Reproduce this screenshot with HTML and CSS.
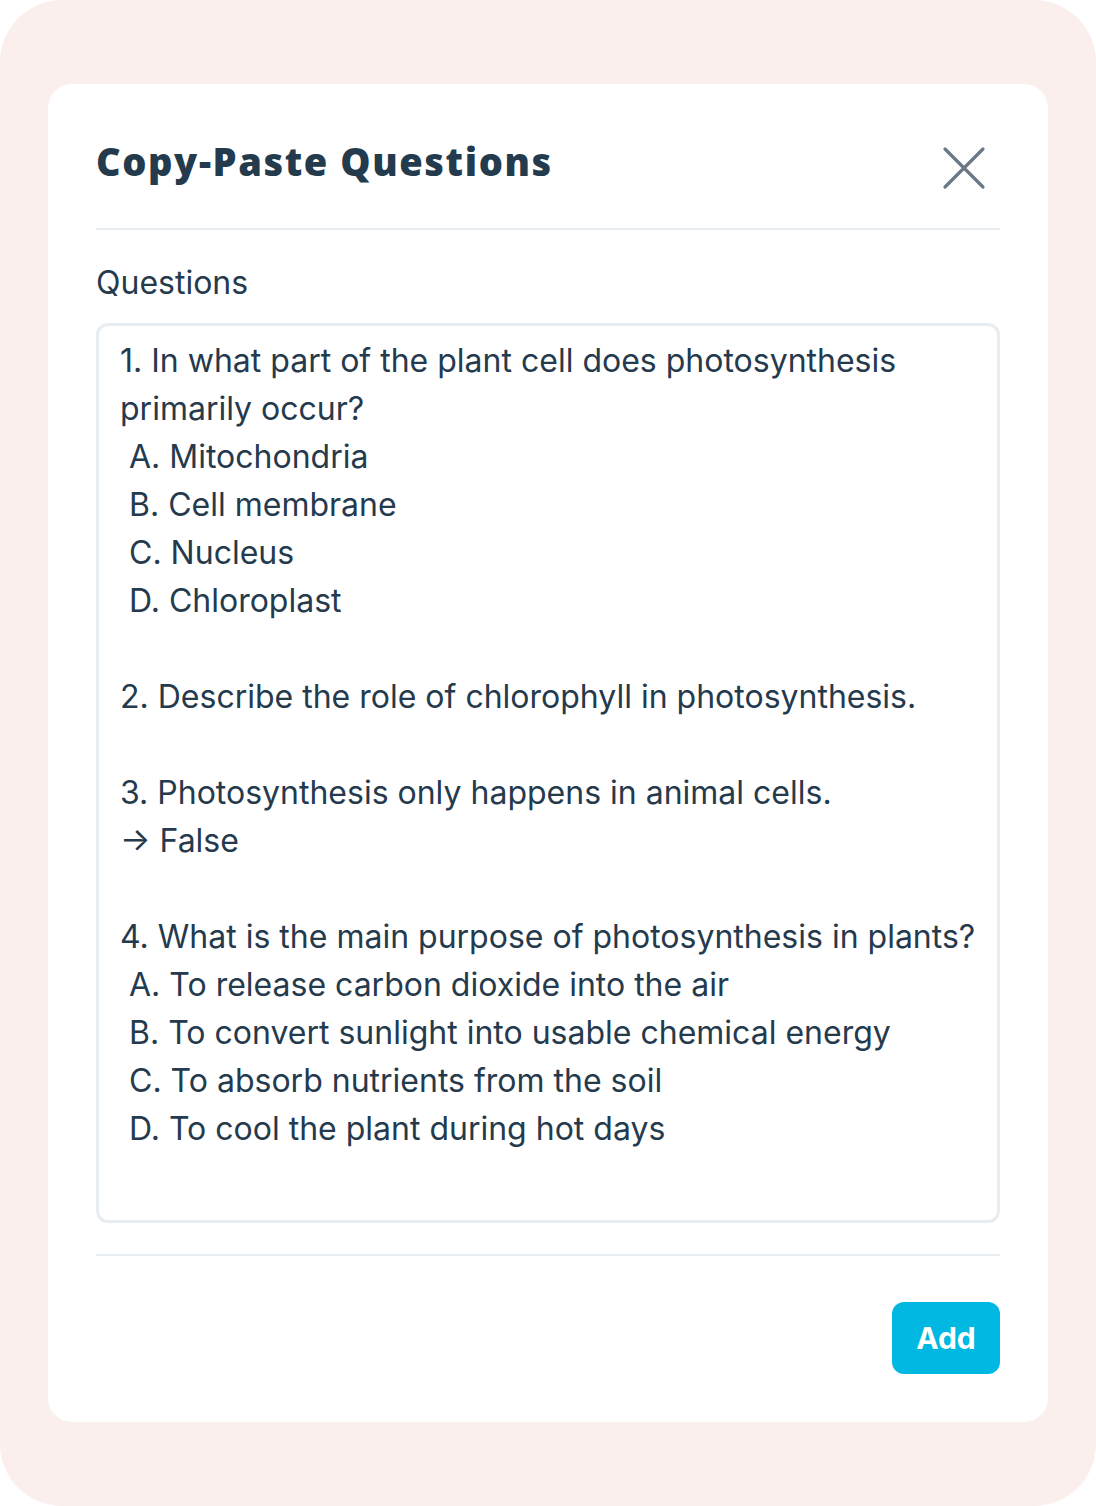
FILE: index.html
```html
<!DOCTYPE html>
<html>
<head>
<meta charset="utf-8">
<link rel="stylesheet" href="styles.css">
</head>
<body>
<div class="backdrop">
  <div class="modal">
    <div class="header">
      <h1 class="title">Copy-Paste Questions</h1>
      <button class="close" aria-label="Close">
        <svg width="44" height="44" viewBox="0 0 44 44"><path d="M3 3L41 41M41 3L3 41" stroke="#6b7886" stroke-width="3.2" stroke-linecap="round" fill="none"/></svg>
      </button>
    </div>
    <div class="body">
      <div class="label">Questions</div>
      <div class="textarea">1. In what part of the plant cell does photosynthesis primarily occur?
 A. Mitochondria
 B. Cell membrane
 C. Nucleus
 D. Chloroplast

2. Describe the role of chlorophyll in photosynthesis.

3. Photosynthesis only happens in animal cells.
→ False

4. What is the main purpose of photosynthesis in plants?
 A. To release carbon dioxide into the air
 B. To convert sunlight into usable chemical energy
 C. To absorb nutrients from the soil
 D. To cool the plant during hot days</div>
    </div>
    <div class="footer">
      <button class="add">Add</button>
    </div>
  </div>
</div>
</body>
</html>
```
FILE: styles.css
```css
html, body { margin: 0; padding: 0; background: #ffffff; }
.backdrop {
  width: 1096px;
  height: 1506px;
  box-sizing: border-box;
  background: #fbefed;
  border-radius: 62px;
  padding: 84px 48px;
}
.modal {
  background: #ffffff;
  border-radius: 24px;
  height: 1338px;
  box-sizing: border-box;
  padding: 0 48px;
  display: flex;
  flex-direction: column;
  font-family: Inter, "Noto Sans", sans-serif;
  color: #253a4d;
}
.header {
  display: flex;
  justify-content: space-between;
  align-items: flex-start;
  padding-top: 51px;
  height: 146px;
  box-sizing: border-box;
  border-bottom: 2px solid #e8edf1;
}
.title {
  margin: 0;
  font-family: "Open Sans", Inter, sans-serif;
  font-weight: 800;
  font-size: 38px;
  line-height: 52px;
  letter-spacing: 1.6px;
  color: #243a4d;
}
.close {
  border: none;
  background: none;
  padding: 0;
  margin-top: 11px;
  margin-right: 14px;
  width: 44px;
  height: 44px;
}
.body { padding-top: 33px; }
.label {
  font-size: 32px;
  line-height: 40px;
  margin-bottom: 20px;
}
.textarea {
  box-sizing: border-box;
  height: 900px;
  border: 3px solid #e8edf1;
  border-radius: 12px;
  padding: 11px 16px 10px 21px;
  font-size: 32px;
  line-height: 48px;
  white-space: pre-wrap;
}
.footer {
  margin-top: 31px;
  border-top: 2px solid #e8edf1;
  padding-top: 46px;
  display: flex;
  justify-content: flex-end;
}
.add {
  width: 108px;
  height: 72px;
  border: none;
  border-radius: 12px;
  background: #00b8e2;
  color: #ffffff;
  font-family: Inter, sans-serif;
  font-weight: 700;
  font-size: 30px;
}
```
